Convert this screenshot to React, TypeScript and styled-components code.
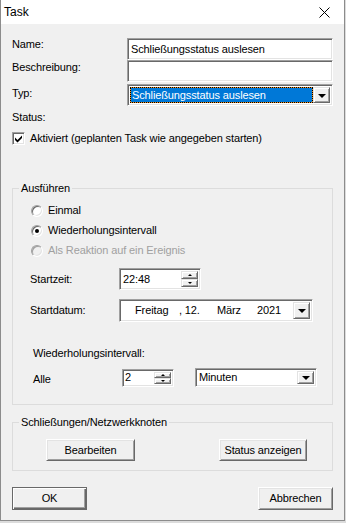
import styled, { createGlobalStyle } from 'styled-components';

const GlobalStyle = createGlobalStyle`
	html, body {
		margin: 0;
		padding: 0;
		background: #dcdcdc;
	}
	* {
		box-sizing: border-box;
	}
`

const Window = styled.div`
	width: 345px;
	height: 521px;
	display: flex;
	flex-direction: column;
	border: 1px solid #8c8c8c;
	border-top: none;
	background: #f0f0f0;
	font-family: "Liberation Sans", Arial, sans-serif;
	font-size: 11px;
	line-height: 13px;
	letter-spacing: -0.12px;
	color: #000;
`

const TitleBar = styled.div`
	height: 24px;
	flex: none;
	display: flex;
	align-items: center;
	justify-content: space-between;
	background: #fff;
	padding: 0 14px 0 3px;
`

const Caption = styled.span`
	font-size: 12px;
	line-height: 14px;
	letter-spacing: 0;
`

const Body = styled.div`
	flex: 1;
	display: flex;
	flex-direction: column;
	padding: 14px 11px 0 11px;
`

const FieldRow = styled.div<{ $mt?: number }>`
	display: flex;
	margin-top: ${p => p.$mt ?? 0}px;
`

const Label = styled.span<{ $w?: number; $pt?: number; $ml?: number }>`
	flex: none;
	width: ${p => (p.$w ? `${p.$w}px` : 'auto')};
	padding-top: ${p => p.$pt ?? 0}px;
	margin-left: ${p => p.$ml ?? 0}px;
`

const Sunken = styled.div<{ $w: number; $h: number }>`
	width: ${p => p.$w}px;
	height: ${p => p.$h}px;
	display: flex;
	align-items: center;
	background: #fff;
	border: 1px solid;
	border-color: #a0a0a0 #fff #fff #a0a0a0;
	box-shadow: inset 1px 1px 0 #696969, inset -1px -1px 0 #e3e3e3;
	padding: 2px;
`

const BoxText = styled.span<{ $pl?: number }>`
	flex: 1;
	padding-left: ${p => p.$pl ?? 1}px;
	white-space: nowrap;
	overflow: hidden;
`

const Selected = styled.span`
	flex: 1;
	align-self: stretch;
	display: flex;
	align-items: center;
	color: #fff;
	padding-left: 1px;
	border: 1px dotted #000;
	background: #f0901e;
	box-shadow: inset 0 0 0 40px #0078d7;
`

const DropButton = styled.span`
	flex: none;
	width: 17px;
	align-self: stretch;
	display: flex;
	align-items: center;
	justify-content: center;
	background: #f0f0f0;
	border: 1px solid;
	border-color: #e3e3e3 #696969 #696969 #e3e3e3;
	box-shadow: inset 1px 1px 0 #fff, inset -1px -1px 0 #a0a0a0;

	&::after {
		content: '';
		border-left: 4px solid transparent;
		border-right: 4px solid transparent;
		border-top: 4px solid #000;
		margin-top: 1px;
	}
`

const SpinButtons = styled.span`
	flex: none;
	width: 17px;
	align-self: stretch;
	display: flex;
	flex-direction: column;
`

const SpinPart = styled.span<{ $dir: 'up' | 'down' }>`
	flex: 1;
	display: flex;
	align-items: center;
	justify-content: center;
	background: #f0f0f0;
	border: 1px solid;
	border-color: #e3e3e3 #696969 #696969 #e3e3e3;
	box-shadow: inset 1px 1px 0 #fff, inset -1px -1px 0 #a0a0a0;

	&::after {
		content: '';
		border-left: 2px solid transparent;
		border-right: 2px solid transparent;
		${p => (p.$dir === 'up' ? 'border-bottom: 2px solid #000;' : 'border-top: 2px solid #000;')}
	}
`

const StatusLabel = styled.div`
	margin-top: 5px;
`

const CheckRow = styled.label`
	display: flex;
	align-items: center;
	gap: 5px;
	margin-top: 8px;
`

const CheckBox = styled.span`
	width: 13px;
	height: 13px;
	display: flex;
	align-items: center;
	justify-content: center;
	background: #fff;
	border: 1px solid;
	border-color: #a0a0a0 #fff #fff #a0a0a0;
	box-shadow: inset 1px 1px 0 #696969, inset -1px -1px 0 #e3e3e3;
`

const Group = styled.fieldset<{ $mt: number; $pt: number; $pb: number }>`
	margin: ${p => p.$mt}px 0 0 0;
	padding: ${p => p.$pt}px 0 ${p => p.$pb}px 0;
	border: 1px solid #dcdcdc;
	min-width: 0;
	display: flex;
	flex-direction: column;
`

const Legend = styled.legend`
	margin-left: 6px;
	padding: 0 2px;
	line-height: 13px;
`

const RadioList = styled.div`
	display: flex;
	flex-direction: column;
	gap: 7px;
	padding-left: 18px;
`

const RadioRow = styled.label<{ $disabled?: boolean }>`
	display: flex;
	align-items: center;
	gap: 5px;
	height: 13px;
	color: ${p => (p.$disabled ? '#a0a0a0' : '#000')};
`

const RadioDot = styled.span<{ $checked?: boolean; $disabled?: boolean }>`
	width: 12px;
	height: 12px;
	border-radius: 50%;
	display: flex;
	align-items: center;
	justify-content: center;
	background: ${p => (p.$disabled ? '#f0f0f0' : '#fff')};
	border: 1px solid;
	border-color: #a0a0a0 #fff #fff #a0a0a0;
	box-shadow: inset 1px 1px 0 ${p => (p.$disabled ? '#a0a0a0' : '#696969')}, inset -1px -1px 0 #e3e3e3;

	&::after {
		content: '';
		width: 4px;
		height: 4px;
		border-radius: 50%;
		background: ${p => (p.$checked ? '#000' : 'transparent')};
	}
`

const InnerRow = styled.div<{ $mt: number }>`
	display: flex;
	align-items: center;
	margin-top: ${p => p.$mt}px;
	padding-left: 17px;
`

const DatePart = styled.span<{ $w?: number }>`
	flex: none;
	width: ${p => (p.$w ? `${p.$w}px` : 'auto')};
	white-space: pre;
`

const DateFill = styled.span`
	flex: 1;
`

const ButtonRow = styled.div<{ $pl: number; $pr: number }>`
	display: flex;
	justify-content: space-between;
	padding: 0 ${p => p.$pr}px 0 ${p => p.$pl}px;
`

const Button = styled.button<{ $w: number; $h: number; $default?: boolean }>`
	width: ${p => p.$w}px;
	height: ${p => p.$h}px;
	padding: 0;
	font: inherit;
	letter-spacing: inherit;
	color: #000;
	background: #f0f0f0;
	border: 1px solid;
	border-color: ${p => (p.$default ? '#696969' : '#fff #696969 #696969 #fff')};
	box-shadow: ${p =>
		p.$default
			? 'inset 1px 1px 0 #fff, inset -1px -1px 0 #696969, inset -2px -2px 0 #a0a0a0'
			: 'inset 1px 1px 0 #e3e3e3, inset -1px -1px 0 #a0a0a0'};
`

const Footer = styled.div`
	display: flex;
	justify-content: space-between;
	margin-top: 16px;
`

const CloseIcon = () => (
	<svg width="11" height="11" viewBox="0 0 11 11">
		<path d="M0.5 0.5 L10.5 10.5 M10.5 0.5 L0.5 10.5" stroke="#000" strokeWidth="1" fill="none" />
	</svg>
)

const CheckMark = () => (
	<svg width="9" height="9" viewBox="0 0 9 9">
		<path d="M1 3.5 L3.5 6 L8 1.5 L8 4 L3.5 8.5 L1 6 Z" fill="#000" />
	</svg>
)

const App = () => {
	return (
		<>
			<GlobalStyle />
			<Window>
				<TitleBar>
					<Caption>Task</Caption>
					<CloseIcon />
				</TitleBar>
				<Body>
					<FieldRow>
						<Label $w={115} $pt={0}>Name:</Label>
						<Sunken $w={206} $h={22}>
							<BoxText>Schließungsstatus auslesen</BoxText>
						</Sunken>
					</FieldRow>
					<FieldRow>
						<Label $w={115} $pt={1}>Beschreibung:</Label>
						<Sunken $w={206} $h={22} />
					</FieldRow>
					<FieldRow $mt={2}>
						<Label $w={115} $pt={3}>Typ:</Label>
						<Sunken $w={206} $h={22}>
							<Selected>Schließungsstatus auslesen</Selected>
							<DropButton />
						</Sunken>
					</FieldRow>
					<StatusLabel>Status:</StatusLabel>
					<CheckRow>
						<CheckBox>
							<CheckMark />
						</CheckBox>
						Aktiviert (geplanten Task wie angegeben starten)
					</CheckRow>

					<Group $mt={37} $pt={9} $pb={17}>
						<Legend>Ausführen</Legend>
						<RadioList>
							<RadioRow>
								<RadioDot />
								Einmal
							</RadioRow>
							<RadioRow>
								<RadioDot $checked />
								Wiederholungsintervall
							</RadioRow>
							<RadioRow $disabled>
								<RadioDot $disabled />
								Als Reaktion auf ein Ereignis
							</RadioRow>
						</RadioList>
						<InnerRow $mt={11}>
							<Label $w={89}>Startzeit:</Label>
							<Sunken $w={82} $h={22}>
								<BoxText>22:48</BoxText>
								<SpinButtons>
									<SpinPart $dir="up" />
									<SpinPart $dir="down" />
								</SpinButtons>
							</Sunken>
						</InnerRow>
						<InnerRow $mt={9}>
							<Label $w={89}>Startdatum:</Label>
							<Sunken $w={194} $h={23}>
								<DatePart $w={13} />
								<DatePart $w={44}>Freitag</DatePart>
								<DatePart $w={38}>, 12.</DatePart>
								<DatePart $w={40}>März</DatePart>
								<DatePart>2021</DatePart>
								<DateFill />
								<DropButton />
							</Sunken>
						</InnerRow>
						<InnerRow $mt={25}>
							<Label $ml={3}>Wiederholungsintervall:</Label>
						</InnerRow>
						<InnerRow $mt={8}>
							<Label $w={89} $ml={3} $pt={3}>Alle</Label>
							<Sunken $w={52} $h={18}>
								<BoxText $pl={0}>2</BoxText>
								<SpinButtons>
									<SpinPart $dir="up" />
									<SpinPart $dir="down" />
								</SpinButtons>
							</Sunken>
							<Label $w={21} />
							<Sunken $w={122} $h={19}>
								<BoxText>Minuten</BoxText>
								<DropButton />
							</Sunken>
						</InnerRow>
					</Group>

					<Group $mt={11} $pt={10} $pb={9}>
						<Legend>Schließungen/Netzwerkknoten</Legend>
						<ButtonRow $pl={33} $pr={25}>
							<Button $w={89} $h={22}>Bearbeiten</Button>
							<Button $w={88} $h={22}>Status anzeigen</Button>
						</ButtonRow>
					</Group>

					<Footer>
						<Button $w={75} $h={23} $default>OK</Button>
						<Button $w={75} $h={23}>Abbrechen</Button>
					</Footer>
				</Body>
			</Window>
		</>
	);
};

export default App;
